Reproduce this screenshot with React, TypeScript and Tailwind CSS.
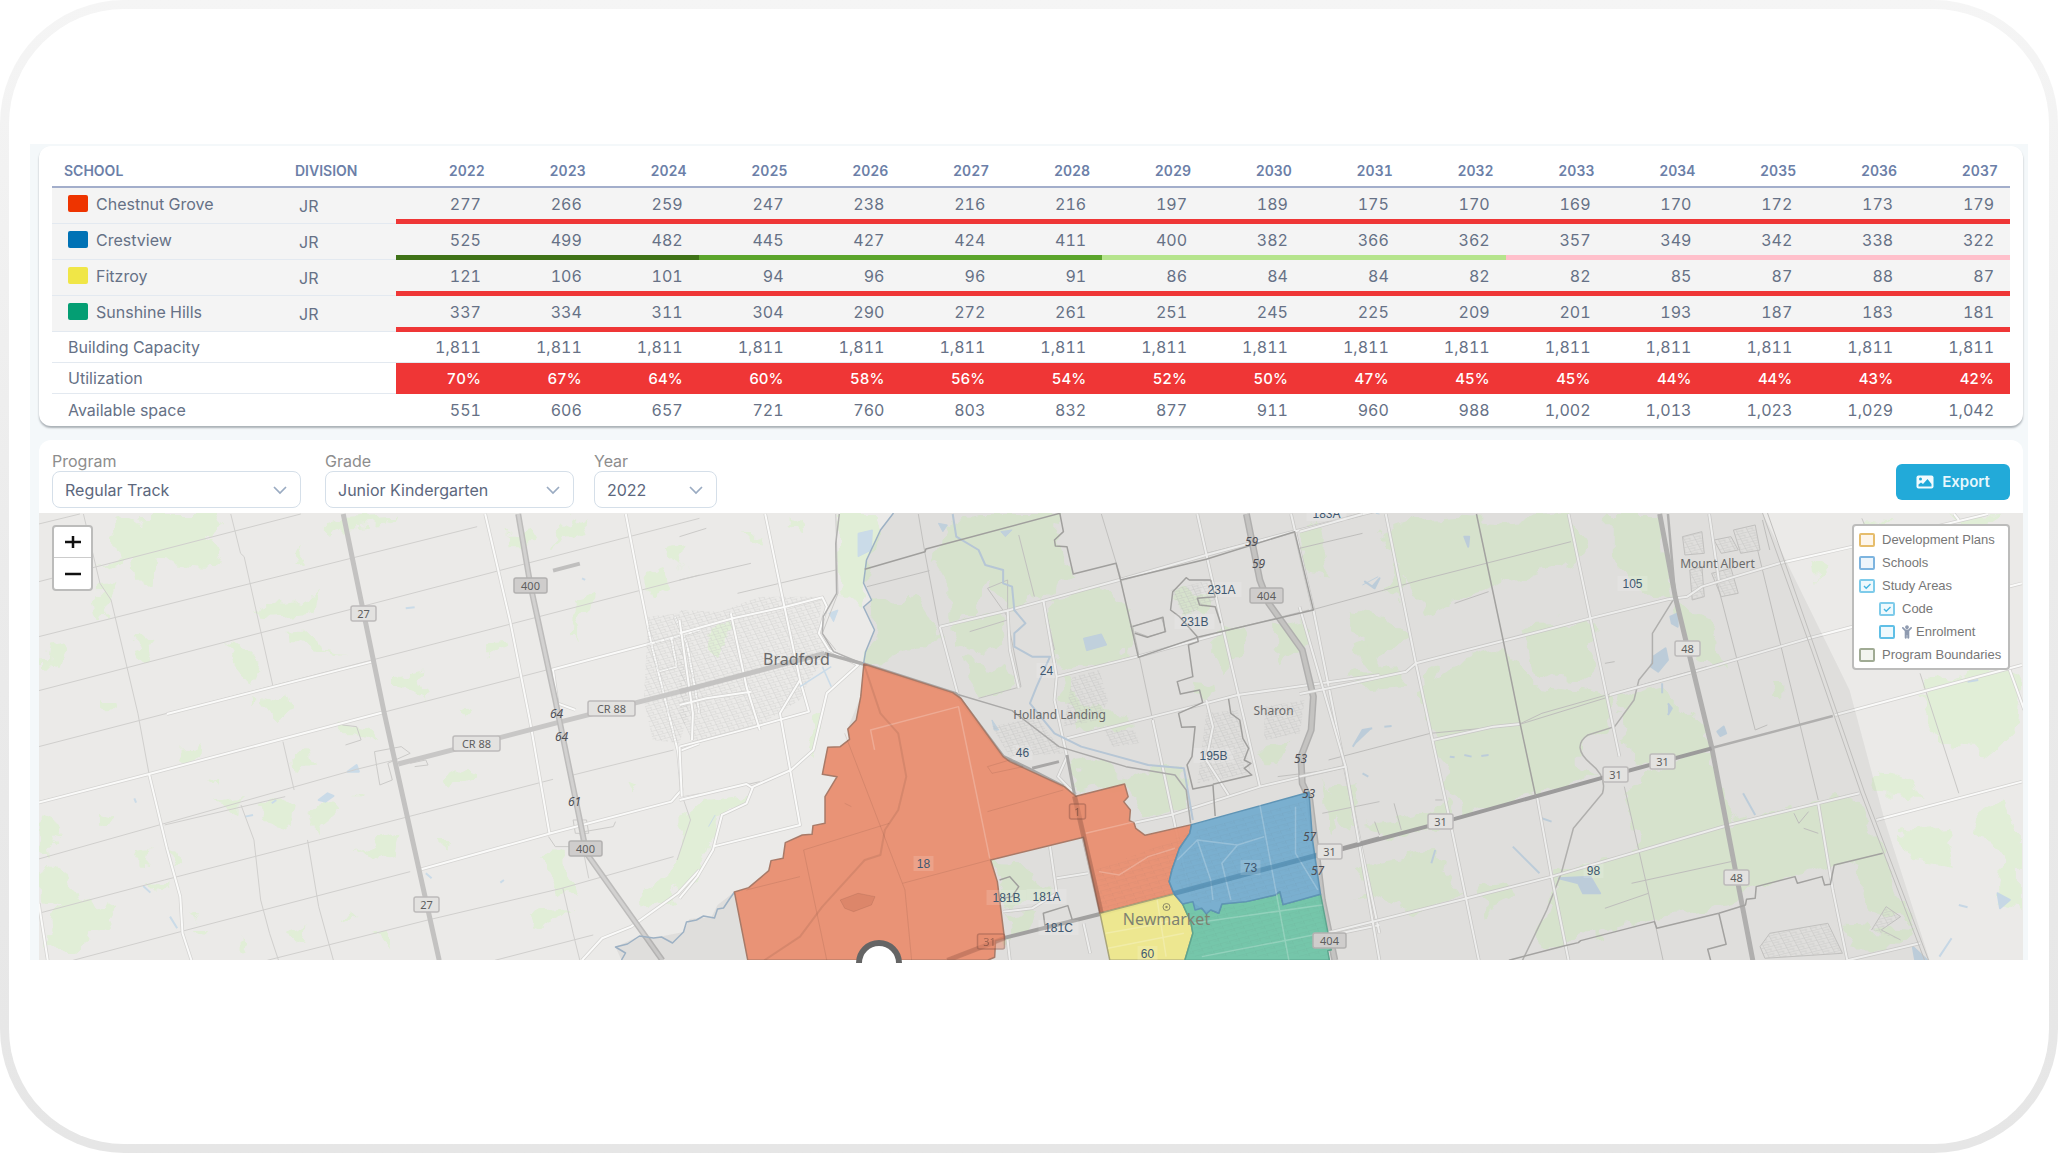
import React, { useState } from 'react';
import { FaChild } from 'react-icons/fa';

const YEARS = Array.from({ length: 16 }, (_, i) => 2022 + i);

interface School {
  name: string;
  swatch: string;
  division: string;
  enrolment: number[];
}

const SCHOOLS: School[] = [
  {
    name: 'Chestnut Grove',
    swatch: 'bg-[#ee3400]',
    division: 'JR',
    enrolment: [277, 266, 259, 247, 238, 216, 216, 197, 189, 175, 170, 169, 170, 172, 173, 179],
  },
  {
    name: 'Crestview',
    swatch: 'bg-[#0072b5]',
    division: 'JR',
    enrolment: [525, 499, 482, 445, 427, 424, 411, 400, 382, 366, 362, 357, 349, 342, 338, 322],
  },
  {
    name: 'Fitzroy',
    swatch: 'bg-[#f0e647]',
    division: 'JR',
    enrolment: [121, 106, 101, 94, 96, 96, 91, 86, 84, 84, 82, 82, 85, 87, 88, 87],
  },
  {
    name: 'Sunshine Hills',
    swatch: 'bg-[#049e73]',
    division: 'JR',
    enrolment: [337, 334, 311, 304, 290, 272, 261, 251, 245, 225, 209, 201, 193, 187, 183, 181],
  },
];

const UTILIZATION = [70, 67, 64, 60, 58, 56, 54, 52, 50, 47, 45, 45, 44, 44, 43, 42];
const AVAILABLE = [551, 606, 657, 721, 760, 803, 832, 877, 911, 960, 988, 1002, 1013, 1023, 1029, 1042];

// Colour of the bar under each enrolment figure
function barColor(school: string, value: number) {
  if (school !== 'Crestview') return 'border-[#ef3636]';
  if (value >= 480) return 'border-[#3f7217]';
  if (value >= 410) return 'border-[#5ba52b]';
  if (value >= 360) return 'border-[#b5e48c]';
  return 'border-[#ffc0cb]';
}

function EnrolmentTable() {
  return (
    <table className="w-full table-fixed border-separate border-spacing-0 text-base leading-5 text-[#667186] tabular-nums">
      <colgroup>
        <col className="w-[235px]" />
        <col className="w-[109px]" />
        {YEARS.map((y) => (
          <col key={y} />
        ))}
      </colgroup>
      <thead>
        <tr className="h-[34px] text-sm text-[#6c7fa8]">
          <th className="border-b-2 border-[#a3aecb] p-0 pt-0.5 pl-3 text-left font-semibold">SCHOOL</th>
          <th className="border-b-2 border-[#a3aecb] p-0 pt-0.5 pl-2 text-left font-semibold">DIVISION</th>
          {YEARS.map((y) => (
            <th key={y} className="border-b-2 border-[#a3aecb] p-0 pt-0.5 pr-3 text-right font-semibold">
              {y}
            </th>
          ))}
        </tr>
      </thead>
      <tbody>
        {SCHOOLS.map((s) => (
          <tr key={s.name} className="h-9 bg-[#f4f4f4]">
            <td className="border-b border-[#e3e9f0] p-0 pb-1 pl-4">
              <div className="flex items-center gap-2">
                <span className={`h-[17px] w-5 rounded-xs ${s.swatch}`} />
                {s.name}
              </div>
            </td>
            <td className="border-b border-[#e3e9f0] p-0 pl-3">{s.division}</td>
            {s.enrolment.map((v, i) => (
              <td key={i} className={`border-b-[5px] p-0 pr-4 text-right ${barColor(s.name, v)}`}>
                {v}
              </td>
            ))}
          </tr>
        ))}
        <tr className="h-[31px]">
          <td colSpan={2} className="border-b border-[#e3e9f0] p-0 pl-4">Building Capacity</td>
          {YEARS.map((y) => (
            <td key={y} className="border-b border-[#e3e9f0] p-0 pr-4 text-right">1,811</td>
          ))}
        </tr>
        <tr className="h-[31px]">
          <td colSpan={2} className="border-b border-[#e3e9f0] p-0 pl-4">Utilization</td>
          {UTILIZATION.map((u, i) => (
            <td key={i} className="bg-[#ef3636] p-0 pr-4 text-right text-[15px] font-medium text-white">{u}%</td>
          ))}
        </tr>
        <tr className="h-[31px]">
          <td colSpan={2} className="p-0 pl-4">Available space</td>
          {AVAILABLE.map((a, i) => (
            <td key={i} className="p-0 pr-4 text-right">{a.toLocaleString('en-US')}</td>
          ))}
        </tr>
      </tbody>
    </table>
  );
}

interface FilterSelectProps {
  id: string;
  label: string;
  options: string[];
  width: string;
}

function FilterSelect({ id, label, options, width }: FilterSelectProps) {
  return (
    <div className={`flex flex-col ${width}`}>
      <label htmlFor={id} className="text-base leading-5 text-[#8d8d8d]">
        {label}
      </label>
      <div className="relative">
        <select
          id={id}
          className="h-[37px] w-full appearance-none rounded-lg border border-[#d5dfe9] bg-white px-3 text-base text-[#5c677d]"
        >
          {options.map((o) => (
            <option key={o}>{o}</option>
          ))}
        </select>
        <svg
          className="pointer-events-none absolute top-3.5 right-3.5 h-2.5 w-3.5"
          viewBox="0 0 14 10"
          fill="none"
          stroke="#9aabc2"
          strokeWidth="1.7"
        >
          <path d="M1 2l6 6 6-6" />
        </svg>
      </div>
    </div>
  );
}

interface Layer {
  id: string;
  label: string;
  box: string;
  checked?: boolean;
  nested?: boolean;
  icon?: boolean;
}

const LAYERS: Layer[] = [
  { id: 'plans', label: 'Development Plans', box: 'border-[#e6bd6c] bg-[#fdf5ea]' },
  { id: 'schools', label: 'Schools', box: 'border-[#7db4df] bg-[#edf5fb]' },
  { id: 'areas', label: 'Study Areas', box: 'border-[#7ecbea] bg-[#eef9fd]', checked: true },
  { id: 'code', label: 'Code', box: 'border-[#7ecbea] bg-[#eef9fd]', checked: true, nested: true },
  { id: 'enrolment', label: 'Enrolment', box: 'border-[#5fbfe6] bg-[#eef9fd]', nested: true, icon: true },
  { id: 'bounds', label: 'Program Boundaries', box: 'border-[#a0ab94] bg-[#f2f4ef]' },
];

function LayerLegend() {
  return (
    <div className="absolute top-[11px] right-[13px] w-[158px] rounded border-2 border-[#bcbcbb] bg-white py-0.5 pl-[5px] font-['Liberation_Sans',sans-serif]">
      {LAYERS.map((l) => (
        <div key={l.id} className={`flex h-[23px] items-center gap-[7px] ${l.nested ? 'pl-5' : ''}`}>
          <span className="relative flex">
            <input
              id={l.id}
              type="checkbox"
              defaultChecked={l.checked}
              className={`peer h-[14px] w-4 appearance-none rounded-xs border-2 ${l.box}`}
            />
            <svg
              className="pointer-events-none absolute inset-0 hidden h-[14px] w-4 peer-checked:block"
              viewBox="0 0 16 14"
              fill="none"
              stroke="#45b5e0"
              strokeWidth="1.4"
            >
              <path d="M5 7l2.200 2.200L11.500 5" />
            </svg>
          </span>
          <label htmlFor={l.id} className="flex items-center gap-1 text-[13px] whitespace-nowrap text-[#777]">
            {l.icon && <FaChild className="h-[14px] w-[10px] text-[#8f9bb0]" />}
            {l.label}
          </label>
        </div>
      ))}
    </div>
  );
}

type LabelKind = 'shield' | 'highway' | 'exit' | 'code' | 'town' | 'village' | 'city';

// x and y are the centre of the label
const LABELS: [string, number, number, LabelKind][] = [
  ['27', 364, 614, 'shield'],
  ['400', 531, 586, 'highway'],
  ['CR 88', 612, 709, 'shield'],
  ['CR 88', 477, 744, 'shield'],
  ['400', 586, 849, 'highway'],
  ['27', 427, 905, 'shield'],
  ['64', 557, 714, 'exit'],
  ['64', 562, 737, 'exit'],
  ['61', 575, 802, 'exit'],
  ['Bradford', 797, 660, 'town'],
  ['24', 1047, 671, 'code'],
  ['Holland Landing', 1060, 715, 'village'],
  ['46', 1023, 753, 'code'],
  ['231A', 1222, 590, 'code'],
  ['231B', 1195, 622, 'code'],
  ['404', 1267, 596, 'highway'],
  ['59', 1252, 542, 'exit'],
  ['59', 1259, 564, 'exit'],
  ['183A', 1327, 514, 'code'],
  ['Sharon', 1274, 711, 'village'],
  ['195B', 1214, 756, 'code'],
  ['53', 1301, 759, 'exit'],
  ['53', 1309, 794, 'exit'],
  ['57', 1310, 837, 'exit'],
  ['57', 1318, 871, 'exit'],
  ['31', 1330, 852, 'shield'],
  ['18', 924, 864, 'code'],
  ['181B', 1007, 898, 'code'],
  ['181A', 1047, 897, 'code'],
  ['181C', 1059, 928, 'code'],
  ['Newmarket', 1167, 920, 'city'],
  ['73', 1251, 868, 'code'],
  ['60', 1148, 954, 'code'],
  ['404', 1330, 941, 'highway'],
  ['Mount Albert', 1718, 564, 'village'],
  ['105', 1633, 584, 'code'],
  ['48', 1688, 649, 'shield'],
  ['31', 1616, 775, 'shield'],
  ['31', 1663, 762, 'shield'],
  ['31', 1441, 822, 'shield'],
  ['98', 1594, 871, 'code'],
  ['48', 1737, 878, 'shield'],
];

const LABEL_STYLE: Record<LabelKind, string> = {
  shield: "fill-[#5e5e5e] font-['Noto_Sans',sans-serif] text-[11px]",
  highway: "fill-[#5e5e5e] font-['Noto_Sans',sans-serif] text-[11px]",
  exit: "fill-[#4e4e55] font-['Noto_Sans',sans-serif] text-[12px] italic",
  code: "fill-[#3f5870] font-['Liberation_Sans',sans-serif] text-[12px]",
  town: "fill-[#6a6a6a] font-['Noto_Sans',sans-serif] text-[16px]",
  village: "fill-[#6a6a6a] font-['Noto_Sans',sans-serif] text-[12px]",
  city: "fill-[#7d8272] font-['Noto_Sans',sans-serif] text-[16px]",
};

function MapLabels() {
  return (
    <g textAnchor="middle">
      {LABELS.map(([text, x, y, kind]) => {
        const boxed = kind === 'shield' || kind === 'highway';
        const w = text.length === 2 ? 25 : text.length === 3 ? 33 : 47;
        return (
          <g key={`${text}-${x}-${y}`}>
            {boxed && (
              <rect
                x={x - w / 2}
                y={y - 8}
                width={w}
                height={15}
                rx={2}
                className={kind === 'highway' ? 'fill-[#cfcdcc] stroke-[#b3b1b0]' : 'fill-[#e3e2e0] stroke-[#bdbbba]'}
                strokeWidth={1.5}
              />
            )}
            {kind === 'code' && (
              <rect x={x - text.length * 5} y={y - 8} width={text.length * 10} height={15} fill="#fff" opacity={0.14} />
            )}
            <text x={x} y={y + (kind === 'town' || kind === 'city' ? 5 : 4)} className={LABEL_STYLE[kind]}>
              {text}
            </text>
          </g>
        );
      })}
    </g>
  );
}

const WOODS_WEST =
  'M253 75L310 55L318 42L490 42L470 110L495 160L480 205L395 195L350 180L345 240L310 245L300 180L215 205L262 175ZM210 270L262 268L235 355L220 340ZM300 415L335 410L342 480L315 470ZM100 440L145 430L130 510L95 500ZM510 435L560 460L580 500L565 555L525 490ZM650 395L700 390L712 440L770 450L735 455L670 430L652 430ZM610 315L660 300L690 310L720 265L712 335L620 350L560 345ZM650 200L690 130L672 190ZM720 70L770 60L890 50L860 80L770 90L720 100ZM1140 100L1195 80L1205 130L1145 130ZM1250 90L1310 45L1320 110L1240 135ZM1280 310L1330 290L1325 340L1290 360L1300 420L1278 400ZM1440 235L1490 205L1500 260L1450 280ZM1495 150L1530 140L1520 200L1568 230L1500 190ZM1090 430L1140 425L1100 475L1085 465ZM895 520L945 510L940 550L960 600L925 575L895 560ZM1030 620L1055 630L1040 650ZM605 600L640 570L650 640L630 660L600 640ZM410 740L455 735L452 780L410 775ZM570 590L592 600L575 615ZM665 760L690 740L700 800L670 810ZM230 600L265 600L260 630L235 625ZM765 670L830 690L850 730L795 700L770 700ZM470 835L490 840L480 860ZM475 905L540 890L540 950L510 920ZM570 930L620 900L660 915L650 985L585 960ZM690 935L750 910L770 940L700 980ZM1000 840L1050 800L1060 835L1015 860ZM800 880L815 885L800 900ZM225 925L260 940L240 990L225 970ZM88 940L120 960L138 1030L105 1080L88 1040ZM380 1055L410 1070L390 1105ZM310 1050L345 1045L340 1095L318 1090ZM800 1050L890 1000L880 1050L820 1070ZM88 1095L150 1130L175 1185L260 1230L240 1280L195 1300L190 1350L100 1345L105 1250L140 1225L88 1190ZM320 1150L375 1145L360 1175ZM430 1290L465 1290L455 1315ZM540 1310L562 1320L555 1360L540 1350ZM640 1290L690 1270L685 1320L650 1310ZM755 1255L800 1240L780 1265ZM840 1290L870 1300L880 1350L850 1320ZM1180 1240L1290 1230L1240 1290L1190 1280ZM1210 1080L1260 1050L1275 1110L1300 1200L1250 1180ZM1400 850L1420 860L1410 890ZM1568 1000L1520 1080L1500 1130L1440 1170L1445 1220L1500 1190L1568 1110ZM990 1020L1005 1020L995 1050ZM430 1240L450 1250L440 1270Z';

const WOODS_CENTRE =
  'M355 42L450 42L440 100L420 250L405 340L380 300L360 280L350 210ZM600 75L640 50L680 42L855 42L842 130L880 230L815 290L740 330L700 240L650 350L600 370L600 260L560 180L575 140ZM440 310L530 290L590 410L530 440L470 480L420 490L430 400ZM600 380L720 340L730 440L670 460L620 440ZM820 300L960 270L1000 310L1020 460L930 490L850 520L830 380ZM630 470L730 510L750 570L670 595ZM890 700L900 640L860 600L855 540L880 550L905 620L1010 640L1000 680ZM880 800L950 790L1010 830L1090 800L1140 830L1130 930L1050 960L1000 850L900 880ZM1110 290L1190 270L1190 330L1120 350ZM1200 400L1260 390L1270 450L1220 520L1200 470ZM1330 380L1400 360L1410 440L1350 480L1330 440ZM1390 80L1430 60L1450 230L1410 220ZM1160 530L1210 540L1190 600L1150 590ZM1290 750L1370 740L1330 790L1300 790ZM700 1085L770 1090L800 1130L830 1190L740 1220L715 1160ZM730 1240L790 1230L780 1300L735 1320ZM1510 430L1568 400L1568 520L1530 500ZM60 900L160 880L130 930L90 950L60 1060L30 1120L0 1180L0 960ZM60 430L110 350L110 420L70 470ZM240 50L275 60L270 90L240 80ZM300 660L325 640L300 750L285 740ZM150 110L180 105L175 125ZM1440 830L1450 1000L1480 960ZM1500 1200L1568 1150L1568 1190ZM390 140L410 150L400 180Z';

const WOODS_EAST =
  'M160 100L240 60L340 50L420 60L560 42L600 150L560 200L420 250L260 330L230 240L190 160ZM640 42L740 42L770 280L720 290L640 180ZM210 180L230 260L205 300L165 270ZM95 340L180 350L215 420L170 470L110 400ZM250 530L340 480L420 440L480 560L600 580L640 600L650 680L580 740L580 790L620 830L490 880L340 950L270 700ZM100 520L200 500L230 560L140 570ZM460 380L600 370L610 540L480 530ZM650 600L740 560L840 700L850 740L760 790L680 780L670 640ZM780 300L850 350L880 500L820 470L800 420ZM670 850L850 750L890 970L1050 910L1150 890L1200 1050L1100 1100L1020 1130L940 1150L910 1200L740 1260L700 1050ZM530 1120L700 1050L740 1260L580 1310L480 1340L520 1220ZM60 860L120 850L110 980L70 940ZM130 980L260 940L310 900L300 960L200 1010ZM120 1100L280 1060L340 1180L250 1240L160 1190ZM370 1150L430 1140L450 1200L380 1240ZM1110 1020L1200 1050L1270 1280L1180 1230ZM1120 1280L1270 1290L1240 1340L1140 1340ZM970 540L1000 540L1000 600L980 600ZM1300 540L1420 500L1490 540L1480 700L1440 760L1330 740L1280 650ZM1200 820L1260 840L1280 900L1190 890ZM1240 1000L1330 980L1350 1100L1260 1080ZM1390 960L1460 900L1490 1000L1490 1230L1440 1210L1450 1080ZM1160 60L1230 70L1200 110L1160 90ZM1340 50L1440 42L1400 80ZM1070 190L1090 210L1075 240ZM1280 580L1330 590L1300 640Z';

const ROADS_WEST =
  'M88 72L180 42M88 245L675 42M88 410L1070 80M88 572L810 320L1568 55M88 740L835 480L1568 225M88 905L335 822L860 637M860 637L1240 505M88 1077L800 808L885 780M88 1240L370 1140L945 940L1240 838M165 1381L420 1290L920 1115M600 1381L960 1260L1260 1165L1510 1070M1110 1381L1330 1305M1285 825L1510 750M188 42L225 250L250 300L310 640L335 822M518 42L540 160L548 170L612 555M635 725L660 870M541 915L570 1020L585 1200L605 1300L625 1381M690 1020L715 1220L748 1381M1262 1165L1285 1300L1300 1381M1300 1000L1320 1135M1530 890L1548 960L1518 1080M370 975L640 890';

const MAJOR_WEST =
  'M88 908L335 822L860 637M375 642L835 485M335 822L375 1045L405 1190L410 1300L430 1381M1088 42L1145 370L1188 660L1232 1000M1403 42L1430 230L1460 430L1520 755L1528 870L1505 905L1235 1000L945 1108M1235 510L1530 405L1568 390M1528 895L1568 885M88 1210L108 1381M1512 350L1540 430L1568 640M1520 755L1568 730M1240 510L1250 610L1290 630M1475 515L1517 500L1505 415M1305 1381L1350 1315L1415 1280L1520 1180L1568 1110';

const ROADS_CENTRE =
  'M0 240L160 190M0 110L60 85M535 42L550 160L580 370L625 590M420 260L560 212M130 280L350 210M350 42L355 280L320 400L350 450M760 105L795 290M815 300L840 450M650 395L735 360L765 560L670 595M945 42L990 240M1015 380L1030 470L1060 660M1010 380L1080 355L1090 395L1050 410L1020 395M1180 160L1568 30M0 900L180 845M1230 390L1410 330M735 330L735 240L690 265L740 360M1340 830L1460 810M1440 940L1568 905';

const MAJOR_CENTRE =
  'M192 42L235 320L270 540L225 640L270 975L75 1040M0 400L120 355L238 320L320 292L330 320L312 400L335 450L400 495L330 580L300 750L250 810L165 860L150 910L95 945L75 1050L40 1130L0 1195M0 740L170 680L290 635L270 540M115 340L150 560L180 690M0 615L60 595L160 575M0 360L30 640L28 720M0 740L5 890M0 900L150 852L165 865M583 380L740 330L985 240M583 380L625 590M815 300L845 530L840 600L868 770L848 830L888 885M845 530L1025 470L1215 400M985 240L1180 165L1375 95M1160 42L1220 400L1300 860M868 715L1150 620L1250 585L1568 525M1060 660L1105 945L1145 1190M910 1000L1100 945L1300 860L1490 800M1370 42L1420 330L1490 800L1525 1030L1568 1300M1180 600L1195 680L1180 780L1230 885M1375 95L1568 30M735 330L740 450L760 565M830 1040L845 1180L790 1225L725 1235M845 1135L915 1120M905 1270L920 1360M1480 1300L1568 1275M735 1320L740 1381';

const ROADS_EAST =
  'M0 145L130 100M0 340L250 240L560 125M60 780L270 700L450 675L500 640L840 500M450 675L640 590M320 310L390 275M740 42L775 290M860 240L940 690M945 150L1070 900M955 60L970 150M1280 520L1360 880M1160 55L1170 90M630 490L650 485M670 860L720 1180L750 1381M720 1180L630 1225M685 1150L890 1085M1020 940L1030 970L1050 935M1040 985L1070 1000M195 910L210 990M155 965L165 1005M280 900L295 900M940 690L965 675';

const MAJOR_EAST =
  'M0 95L130 42M178 42L240 490L310 960L370 1381M0 582L60 565L220 515L240 490L600 355L760 298L800 290L830 260L990 190L1140 140L1420 42M1350 42L1360 60M555 42L600 355L660 770M845 42L865 240M640 585L815 515L1050 415L1140 380M275 720L400 680L455 672M1105 645L1490 495M1050 415L1490 250M0 830L95 800L0 320M95 800L165 1381M55 1300L345 1195L520 1130L885 975L1155 880M490 890L520 1130L555 1381M1070 910L1100 1170L1130 1381M1190 960L1490 845M1130 1381L1280 1330M1465 510L1495 630';

function BaseMap() {
  return (
    <svg
      className="block h-full w-full"
      viewBox="39 513 1985 447"
      preserveAspectRatio="xMidYMid slice"
      fill="none"
      strokeLinejoin="round"
    >
      <defs>
        <pattern id="streets" width="22" height="15" patternUnits="userSpaceOnUse" patternTransform="rotate(-20)">
          <path d="M0 1H22M1 0V15M12 8V15M1 8H15" stroke="#cccbc9" strokeWidth="1" />
        </pattern>
        <pattern id="streets-faint" width="22" height="16" patternUnits="userSpaceOnUse" patternTransform="rotate(-20)">
          <path d="M0 1H20M1 0V11M12 6H22" stroke="#555" strokeOpacity="0.12" strokeWidth="1" />
        </pattern>
        {/* Breaks up straight edges of woods and ponds */}
        <filter id="ragged" x="0" y="0" width="100%" height="100%">
          <feTurbulence type="fractalNoise" baseFrequency="0.045" numOctaves="3" seed="4" />
          <feDisplacementMap in="SourceGraphic" scale="26" xChannelSelector="R" yChannelSelector="G" />
        </filter>
      </defs>
      <rect x="39" y="513" width="1985" height="447" fill="#ebeae8" />

      {/* The tiles were traced at their own scale, strokes stay in screen pixels */}
      <g className="[&_path]:[vector-effect:non-scaling-stroke]">
        <g filter="url(#ragged)" fill="#e1eed7">
          <path d={WOODS_WEST} transform="translate(0 500) scale(0.4464 0.3333)" />
          <path d={WOODS_CENTRE} transform="translate(680 500) scale(0.4464 0.3333)" />
          <path d={WOODS_EAST} transform="translate(1300 500) scale(0.4848 0.3333)" />
        </g>

        <g transform="translate(0 500) scale(0.4464 0.3333)">
          <path
            d="M715 900L735 880L748 888L730 905ZM780 815L800 795L805 815ZM322 1158L338 1178M382 1250L398 1285M550 950L568 945M610 910L620 900M910 325L930 322M1305 235L1312 240M1122 1148L1130 1140M955 1120L968 1135M302 895L306 908"
            fill="#cadbe8"
            stroke="#cadbe8"
            strokeWidth="2"
          />
          <path d={ROADS_WEST} stroke="#d0cfcd" strokeWidth="1" />
          <path d="M840 755L900 740L920 760L870 790L880 840L852 855L845 800ZM768 675L800 680L810 720L775 735M920 790L955 780L960 795L930 800M1285 960L1315 960L1320 1000L1290 1000ZM1230 1010L1245 1040L1290 1040M1310 995L1375 980L1380 965" stroke="#cbcac8" strokeWidth="1" />
          <path d={MAJOR_WEST} stroke="#d5d4d2" strokeWidth="3.500" />
          <path d={MAJOR_WEST} stroke="#fafaf9" strokeWidth="2" />
          <path d="M770 42L862 640L985 1381" stroke="#c3c2c1" strokeWidth="5" />
          <path d="M893 792L1250 668L1568 560" stroke="#c8c7c6" strokeWidth="5" />
          <path d="M1240 212L1300 191" stroke="#c0bfbe" strokeWidth="4" />
          <path d="M1162 42L1190 260L1245 600L1300 960L1315 1060L1485 1381" stroke="#bdbcbb" strokeWidth="6" />
          <path d="M1162 42L1190 260L1245 600L1300 960L1315 1060L1485 1381" stroke="#d2d1d0" strokeWidth="3" />
        </g>

        <g transform="translate(680 500) scale(0.4464 0.3333)">
          <path
            d="M400 100L432 90L430 150L400 170ZM905 415L945 402L957 435L912 452ZM580 70L600 75L590 95ZM720 95L745 90L730 110ZM335 340L355 330L345 365ZM1560 40L1568 42M65 980L80 945M700 660L715 690L705 690ZM1530 255L1565 230"
            fill="#cadbe8"
            stroke="#cadbe8"
            strokeWidth="1"
          />
          <path d="M0 330L90 335L180 290L320 290L310 400L335 460L290 540L270 600L160 690L30 730L0 640Z" fill="url(#streets)" />
          <path d="M-70 350L0 340L20 640L0 730L-60 720L-80 600Z" fill="url(#streets)" />
          <path d="M880 530L940 510L960 600L940 660L860 680ZM700 680L800 650L860 760L740 770ZM1180 640L1250 630L1280 820L1160 850ZM1100 270L1190 240L1200 300L1130 350ZM950 690L1020 690L1030 730L970 740ZM1310 620L1400 600L1390 700L1310 720Z" fill="url(#streets)" />
          <path d={ROADS_CENTRE} stroke="#cbcac8" strokeWidth="1" />
          <path d={MAJOR_CENTRE} stroke="#d3d2d0" strokeWidth="3.500" />
          <path d={MAJOR_CENTRE} stroke="#fafaf9" strokeWidth="2" />
          <path d="M612 42L620 110L670 150L685 195L725 210L725 250L745 260L750 330L775 370L750 400L750 440L790 470L830 470L800 560L785 610L840 700L900 740L1050 795L1130 805L1150 960" stroke="#bfd0e0" strokeWidth="2" />
          <path d="M320 500L340 560M340 500L270 560" stroke="#cadbe8" strokeWidth="1.500" />
          <path d="M0 575L240 490L325 460" stroke="#c4c3c2" strokeWidth="5" />
          <path d="M358 42L350 130L352 280L322 350L320 400L345 455L412 492L620 582L745 632L850 740L1000 800L1110 825L1135 870L1145 970" stroke="#b2b1b0" strokeWidth="1.500" />
          <path d="M325 460L412 492L620 582L725 770L780 805L860 860" stroke="#b0afae" strokeWidth="3.500" />
          <path d="M790 805L850 785M868 765L885 885L945 1240" stroke="#b0afae" strokeWidth="3" />
          <path d="M1270 42L1300 240L1320 310L1395 450L1420 590L1415 690L1392 770L1395 850L1412 900L1440 1200L1468 1381" stroke="#b9b8b7" strokeWidth="7" />
          <path d="M1270 42L1300 240L1320 310L1395 450L1420 590L1415 690L1392 770L1395 850L1412 900L1440 1200L1468 1381" stroke="#cecdcb" strokeWidth="4" />
          <path d="M600 1381L730 1313L940 1243L1108 1182L1430 1065L1568 1015" stroke="#a9a8a7" strokeWidth="4" />
        </g>

        <g transform="translate(1300 500) scale(0.4848 0.3333)">
          <path
            d="M730 470L755 445L760 480L740 515L725 500ZM862 695L875 680L880 700L868 708ZM535 1135L600 1130L620 1180L585 1180L575 1150ZM765 350L780 340L780 380L768 370ZM135 245L150 260L165 235L155 265ZM1265 1340L1295 1381L1270 1381ZM1440 1180L1465 1200L1445 1225ZM340 110L350 110L348 140ZM748 550V580M760 610L768 625L760 645M915 880L940 945M500 955L520 965M272 1090L280 1050M440 1040L495 1120M1360 1215L1378 1222M130 820L142 830M1320 1370L1345 1315M110 740L130 690L150 685M175 680L190 678M310 770L320 772M340 765L355 770M375 768L390 765M1378 545L1400 540"
            fill="#c6d7e5"
            stroke="#c6d7e5"
            strokeWidth="2"
          />
          <path d="M790 110L830 95L835 160L795 165ZM855 120L890 110L905 150L870 160ZM895 90L940 75L950 150L910 160ZM805 210L830 200L835 290L810 300ZM850 220L890 205L905 280L870 290Z" fill="url(#streets)" stroke="#cbcac8" />
          <path d="M950 1340L970 1300L1090 1270L1120 1360L960 1375ZM1180 1290L1210 1220L1240 1250L1200 1290L1240 1320" fill="url(#streets)" stroke="#cbcac8" />
          <path d={ROADS_EAST} stroke="#c8c7c5" strokeWidth="1" />
          <path d="M775 290L728 400L728 490L700 540L690 600L650 680L595 705Q560 740 600 790Q635 830 625 880L565 985L540 1120L510 1230L460 1381" stroke="#b9b8b6" strokeWidth="1.500" />
          <path d={MAJOR_EAST} stroke="#d3d2d0" strokeWidth="3.500" />
          <path d={MAJOR_EAST} stroke="#fafaf9" strokeWidth="2" />
          <path d="M743 42L775 290L850 740L935 1381" stroke="#b9b8b7" strokeWidth="5" />
          <path d="M760 42L775 290M848 745L1100 648" stroke="#b9b8b7" strokeWidth="2.500" />
          <path d="M35 1068L300 965L628 832L850 745" stroke="#a3a2a2" strokeWidth="4" />
        </g>
      </g>

      {/* Shade over the whole study area */}
      <path
        d="M894 513L881 530L867 560L864 583L872 600L864 607L875 630L866 652L864 664L861 697L848 729L850 739L841 747L828 747L823 774L838 777L826 797L826 823L813 826L812 834L803 835L786 843L784 858L771 861L769 871L749 888L735 892L718 905L712 917L690 919L684 932L654 938L640 936L616 947L622 960H1930L1885 820L1850 690L1763 513Z"
        fill="#3d3d3a"
        opacity="0.065"
      />
      <path
        d="M894 513L881 530L867 560L864 583L872 600L864 607L875 630L866 652L864 664"
        stroke="#9db1c4"
        strokeWidth="1.500"
      />
      <path d="M735 892L730 899L724 908L718 909L715 918L704 916L697 920L687 922L684 932L673 943L662 937L654 938L640 936L628 944L616 947L626 953L622 960" stroke="#9db1c4" strokeWidth="1.500" />
      <path d="M1763 513L1812 650L1861 792L1925 960M1768 513L1816 650L1865 792L1929 960" stroke="#c0bfbd" strokeWidth="1" />

      <g className="[&_path]:[vector-effect:non-scaling-stroke]">
        {/* Study area outlines */}
        <g transform="translate(680 500) scale(0.4464 0.3333)" stroke="#a09f9d" strokeWidth="1.500">
          <path d="M415 208L550 155L552 147L852 40L860 95L840 120L842 138L868 140L882 222L978 190L988 240L1180 178L1378 95L1420 330L1220 393L1165 410L1028 472L988 240M1190 240H1142L1135 233L1105 275L1100 330L1120 350L1160 410L1162 425L1140 435L1150 530L1115 545L1122 582L1165 570L1172 608L1118 640L1125 682L1155 680L1148 770L1137 795L1150 867L1195 855L1200 948M1190 240L1200 290L1160 295L1165 315L1200 320L1212 370M1230 597L1235 640L1255 660L1262 715L1275 745L1265 780L1280 790L1265 805L1282 825L1195 853M1015 380L1083 352L1088 395L1048 412L1020 400" />
          <path d="M717 1140L740 1130L760 1160L745 1190L725 1195M820 1290L815 1240L870 1217L880 1260" />
        </g>
        <g transform="translate(1300 500) scale(0.4848 0.3333)" stroke="#a3a2a0" strokeWidth="1.500">
          <path d="M365 42L420 420L455 670L487 888M432 1381L545 1338L575 1328L580 1322L732 1265L737 1285L865 1240L920 1215L922 1198L940 1195L942 1160L1022 1130L1027 1150L1078 1130L1083 1155L1095 1153L1103 1095L1203 1060M865 1240L880 1333L842 1348L848 1381" />
        </g>

        <g transform="translate(680 500) scale(0.4464 0.3333)">
          <g strokeWidth="1.500" fillOpacity="0.93">
            <path
              d="M413 492L612 578L630 595L725 770L740 785L862 860L888 889L997 852L1005 890L995 905L1010 930L1008 962L1018 968L1022 985L1043 1006L1147 974L1143 1000L1120 1045L1103 1110L1097 1145L1108 1182L942 1240L905 1012L697 1080L712 1145L728 1315L708 1322L706 1372L690 1381H153L123 1176L155 1163L200 1112L205 1082L232 1075L237 1028L275 1005L297 1003L299 977L326 970L326 890L353 830L320 823L332 742L360 740L381 718L377 687L396 660L406 590Z"
              fill="#ea8d6e"
              stroke="#a87a68"
            />
            <path d="M942 1240L1108 1182L1127 1212L1145 1265L1150 1300L1132 1381H964Z" fill="#eee78a" stroke="#a9a57a" />
            <path
              d="M1127 1212L1150 1205L1155 1215L1180 1235L1190 1230L1208 1240L1215 1212L1270 1205L1335 1185L1345 1175L1352 1214L1436 1183L1460 1350L1452 1352L1456 1381H1132L1150 1300L1145 1265Z"
              fill="#6dc4a6"
              stroke="#5fa58f"
            />
            <path
              d="M1147 974L1410 877L1418 1020L1436 1183L1352 1214L1345 1175L1335 1185L1270 1205L1215 1212L1208 1240L1190 1230L1180 1242L1170 1225L1155 1230L1150 1205L1127 1212L1108 1182L1097 1145L1103 1110L1120 1045L1143 1000Z"
              fill="#72abcd"
              stroke="#5f94b5"
            />
          </g>
          <path d="M942 1230L930 1110L1050 1050L1140 1000L1097 1145L1108 1175ZM1160 990L1400 900L1425 1170L1350 1200L1160 1210L1105 1140ZM1140 1240L1340 1200L1440 1200L1450 1370L1140 1370L1155 1300Z" fill="url(#streets-faint)" />
          {/* Roads showing through the school areas */}
          <g stroke="#fff" strokeOpacity="0.22" strokeWidth="1.500">
            <path d="M437 750L428 690L625 620L695 1075M910 1000L1020 965M940 1115L985 1125L1050 1070L1110 1045M1115 1080L1160 1020L1250 1035L1310 1010M1250 1035L1215 1090L1235 1200M1160 1020L1190 1140L1195 1200M1300 915L1330 1130L1365 1381M1380 920L1380 1060L1430 1170M955 1300L1060 1275L1140 1250M960 1345L1130 1300M1070 1200L1090 1370M1150 1270L1440 1215M1170 1370L1440 1300" />
          </g>
          <g stroke="#6e4136" strokeOpacity="0.15" strokeWidth="1">
            <path d="M370 700L505 1170L520 1381M278 1050L470 970M278 1050L330 1381M690 935L860 870M150 1170L270 1130M500 1150L695 1080M370 910L385 920M690 800L740 780L770 800L700 820Z" />
            <path d="M413 492L450 640L490 700L508 830L490 930L460 990L450 1065L415 1080L320 1220L270 1310L190 1381" strokeWidth="2" />
            <path d="M360 1200L400 1180L438 1190L430 1215L390 1235L370 1225Z" fill="#a05038" fillOpacity="0.18" />
            <path d="M885 889L945 1240" strokeWidth="5" strokeOpacity="0.3" />
            <path d="M600 1381L728 1315" strokeWidth="5" strokeOpacity="0.25" />
          </g>
          <path d="M1108 1180L1430 1065" stroke="#437fa6" strokeOpacity="0.5" strokeWidth="5" />
        </g>
      </g>

      <g opacity="0.5">
        <rect x="1070" y="804" width="16" height="15" rx="2" fill="#e58a6c" stroke="#94594a" strokeWidth="1.500" />
        <rect x="978" y="934" width="27" height="15" rx="2" fill="#e58a6c" stroke="#94594a" strokeWidth="1.500" />
        <g className="fill-[#5b3a30] font-['Noto_Sans',sans-serif] text-[11px]" textAnchor="middle">
          <text x="1078" y="816">1</text>
          <text x="990" y="946">31</text>
        </g>
      </g>
      <circle cx="1167" cy="907" r="3.500" stroke="#8d8a66" />
      <circle cx="1167" cy="907" r="1.200" fill="#8d8a66" />
      <MapLabels />
    </svg>
  );
}

function StudyAreaMap() {
  const [zoom, setZoom] = useState(11);

  return (
    <div className="relative h-[447px]" data-zoom={zoom}>
      <BaseMap />
      <div className="absolute top-3 left-[13px] flex w-[41px] flex-col rounded border-2 border-[#bcbcbb] bg-white">
        <button
          aria-label="Zoom in"
          onClick={() => setZoom(zoom + 1)}
          className="flex h-[31px] items-center justify-center border-b border-[#ccc]"
        >
          <svg width="16" height="14" viewBox="0 0 16 14" stroke="#111" strokeWidth="2.500">
            <path d="M0 7h16M8 1v12" />
          </svg>
        </button>
        <button
          aria-label="Zoom out"
          onClick={() => setZoom(zoom - 1)}
          className="flex h-[31px] items-center justify-center"
        >
          <svg width="16" height="14" viewBox="0 0 16 14" stroke="#111" strokeWidth="2.500">
            <path d="M0 7h16" />
          </svg>
        </button>
      </div>
      <LayerLegend />
      <svg className="absolute -bottom-[3px] left-[42%] -ml-4 w-[46px]" height="23" viewBox="0 0 46 23">
        <path d="M3 23a20 20 0 0 1 40 0" fill="#fff" stroke="#656565" strokeWidth="6" />
      </svg>
    </div>
  );
}

export default function App() {
  return (
    <div className="flex min-h-screen bg-white pr-0.5 pb-px font-[Inter,sans-serif]">
      <div className="flex flex-1 rounded-[124px] bg-gradient-to-b from-[#f5f5f5] via-[#ebebeb] to-[#e6e6e6] p-[9px]">
        <main className="min-w-0 flex-1 rounded-[115px] bg-white px-[21px] pt-[135px] pb-[184px]">
          <div className="flex flex-col gap-3.5 bg-[#f4f8fa] pt-0.5 pr-[5px] pl-[9px]">
            <section className="rounded-xl bg-white px-[13px] pt-2 pb-px shadow-[0_2px_2px_rgba(60,70,80,0.4)]">
              <EnrolmentTable />
            </section>

            <section className="rounded-t-xl bg-white">
              <div className="flex items-end px-[13px] pt-[11px] pb-[5px]">
                <FilterSelect id="program" label="Program" options={['Regular Track', 'French Immersion']} width="mr-6 w-[249px]" />
                <FilterSelect id="grade" label="Grade" options={['Junior Kindergarten', 'Senior Kindergarten']} width="mr-5 w-[249px]" />
                <FilterSelect id="year" label="Year" options={YEARS.map(String)} width="w-[123px]" />
                <button className="mb-2 ml-auto flex h-9 w-[114px] items-center justify-center gap-2 rounded-md bg-[#22aad9] text-[15px] font-semibold text-[#e6f7fd]">
                  <svg width="18" height="14" viewBox="0 0 18 14">
                    <rect x="0.500" y="0.500" width="17" height="13" rx="2" fill="#f2fbfe" />
                    <circle cx="4.500" cy="4" r="1.500" fill="#22aad9" />
                    <path d="M2.500 11.500V9.500L5 7.500l2 1.500 4.500-5 4 5v2.500z" fill="#22aad9" />
                  </svg>
                  Export
                </button>
              </div>
              <StudyAreaMap />
            </section>
          </div>
        </main>
      </div>
    </div>
  );
}
